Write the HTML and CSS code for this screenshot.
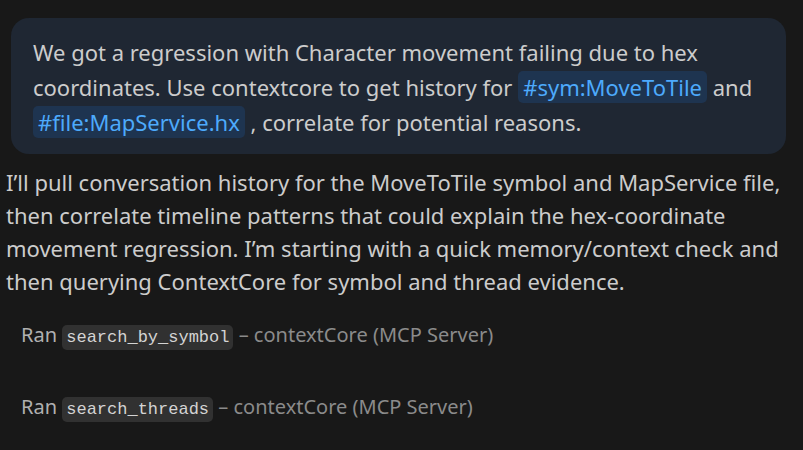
FILE: index.html
```html
<!DOCTYPE html>
<html>
<head>
<meta charset="utf-8">
<link rel="stylesheet" href="styles.css">
</head>
<body>
<div class="chat">
  <div class="user-bubble">
    We got a regression with Character movement failing due to hex coordinates. Use contextcore to get history for <span class="ref">#sym:MoveToTile</span> and <span class="ref">#file:MapService.hx</span> , correlate for potential reasons.
  </div>
  <p class="reply">I’ll pull conversation history for the MoveToTile symbol and MapService file, then correlate timeline patterns that could explain the hex-coordinate movement regression. I’m starting with a quick memory/context check and then querying ContextCore for symbol and thread evidence.</p>
  <div class="tool-row first">Ran <code class="tool">search_by_symbol</code> <span class="muted">– contextCore (MCP Server)</span></div>
  <div class="tool-row">Ran <code class="tool">search_threads</code> <span class="muted">– contextCore (MCP Server)</span></div>
</div>
</body>
</html>
```

FILE: styles.css
```css
html, body {
  margin: 0;
  padding: 0;
  background: #181818;
  width: 803px;
  height: 450px;
  overflow: hidden;
}
.chat {
  display: flex;
  flex-direction: column;
  padding: 18px 8px 0 6px;
  font-family: "Noto Sans", "Open Sans", sans-serif;
  color: #cccccc;
}
.user-bubble {
  margin-left: 5px;
  margin-right: 9px;
  background: #1f2733;
  border-radius: 18px;
  padding: 17px 20px 14px 22px;
  font-size: 22px;
  line-height: 35px;
  color: #cccccc;
}
.ref {
  background: #1e3450;
  color: #4daafc;
  border-radius: 5px;
  padding: 1px 5px;
}
.reply {
  margin: 12px 0 0 0;
  font-size: 22px;
  line-height: 33px;
  color: #cccccc;
}
.tool-row {
  margin-left: 15px;
  font-size: 20px;
  line-height: 30px;
  color: #b0b0b0;
}
.tool-row.first { margin-top: 22px; }
.tool-row + .tool-row { margin-top: 39px; }
.tool {
  font-family: "Liberation Mono", "DejaVu Sans Mono", monospace;
  font-size: 17px;
  background: #313131;
  color: #d4d4d4;
  border-radius: 5px;
  padding: 3px 4px;
}
.muted { color: #8b8b8b; }
```
